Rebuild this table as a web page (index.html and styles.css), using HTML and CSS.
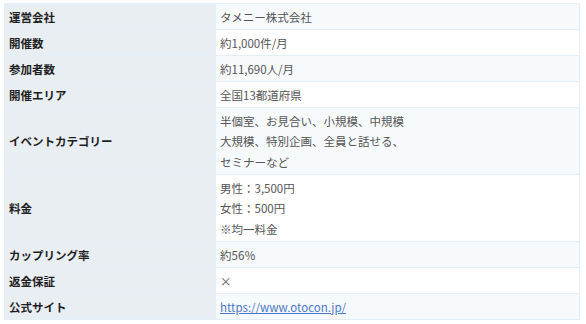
FILE: index.html
```
<!DOCTYPE html>
<html lang="ja">
<head>
<meta charset="utf-8">
<link rel="stylesheet" href="styles.css">
</head>
<body>
<div class="wrap">
<table class="info">
<tbody>
<tr><th>運営会社</th><td>タメニー株式会社</td></tr>
<tr><th>開催数</th><td>約1,000件/月</td></tr>
<tr><th>参加者数</th><td>約11,690人/月</td></tr>
<tr><th>開催エリア</th><td>全国13都道府県</td></tr>
<tr><th>イベントカテゴリー</th><td>半個室、お見合い、小規模、中規模<br>大規模、特別企画、全員と話せる、<br>セミナーなど</td></tr>
<tr><th>料金</th><td>男性：3,500円<br>女性：500円<br>※均一料金</td></tr>
<tr><th>カップリング率</th><td>約56％</td></tr>
<tr><th>返金保証</th><td>×</td></tr>
<tr><th>公式サイト</th><td><a class="link" href="#">https://www.otocon.jp/</a></td></tr>
</tbody>
</table>
</div>
</body>
</html>
```
FILE: styles.css
```
html, body {
  margin: 0;
  padding: 0;
  background: #ffffff;
}
.wrap {
  padding: 3px 4px;
}
.info {
  width: 576px;
  border-collapse: collapse;
  font-family: "Noto Sans CJK JP", "Noto Sans", sans-serif;
  font-size: 11.5px;
  line-height: 20.5px;
}
.info th,
.info td {
  border: 1px solid #e4eef7;
  padding: 2.5px 4px 2px;
  vertical-align: middle;
  text-align: left;
}
.info th {
  width: 202px;
  background: #e9eef3;
  color: #1f1f1f;
  font-weight: bold;
}
.info td {
  color: #555555;
  background: #ffffff;
}
.info tr:nth-child(odd) td {
  background: #f7fafd;
}
.link {
  color: #4a78c8;
  text-decoration: underline;
}
```
